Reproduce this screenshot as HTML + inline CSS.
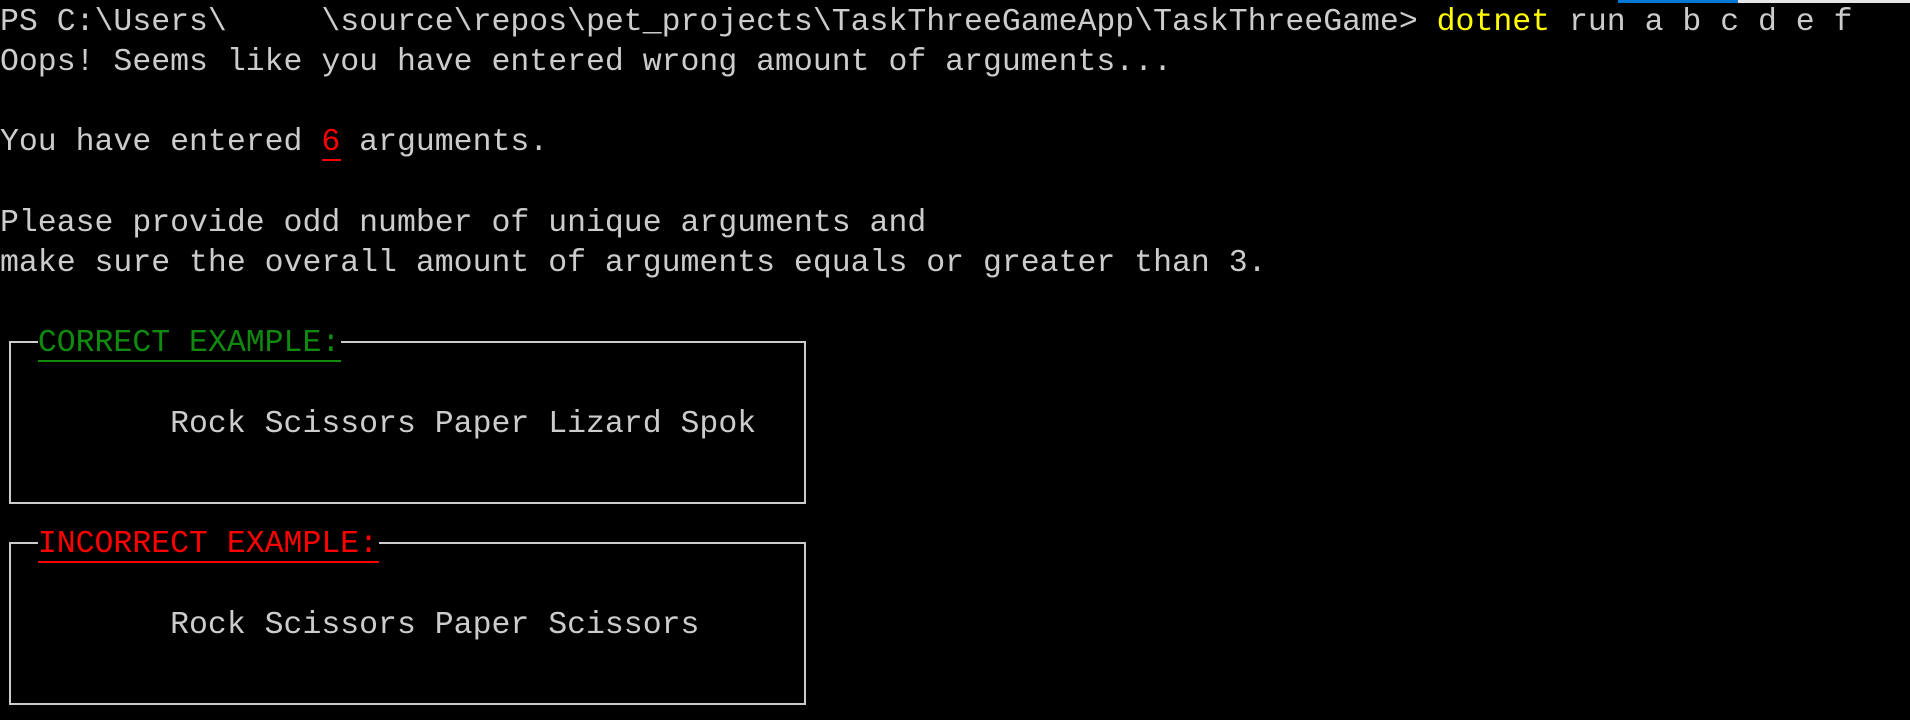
<!DOCTYPE html>
<html><head><meta charset="utf-8"><style>
html,body{margin:0;padding:0;background:#000;width:1910px;height:720px;overflow:hidden;position:relative}
.l{position:absolute;left:0;white-space:pre;font-family:"Liberation Mono",monospace;font-size:31.5px;line-height:40.2px;height:40.2px;color:#cccccc;padding-top:2.5px}
.y{color:#ffff00}.r{color:#ff0000}.g{color:#0f8a0f}
.u{position:absolute;height:2px}
.box{position:absolute;border:2px solid #cccccc;box-sizing:border-box}
.bar1{position:absolute;top:0;left:1618px;width:120px;height:3px;background:#0078d4}
.bar2{position:absolute;top:0;left:1738px;width:172px;height:3px;background:#e6e6e6}
</style></head><body>
<div class="bar1"></div><div class="bar2"></div>
<div class="box" style="left:8.5px;top:340.7px;width:797px;height:163px"></div>
<div class="box" style="left:8.5px;top:541.7px;width:797px;height:163px"></div>
<div style="position:absolute;left:37.9px;top:330px;width:302.9px;height:25px;background:#000"></div>
<div style="position:absolute;left:37.9px;top:531px;width:340.7px;height:25px;background:#000"></div>

<div class="l" style="top:0">PS C:\Users\     \source\repos\pet_projects\TaskThreeGameApp\TaskThreeGame&gt; <span class="y">dotnet</span> run a b c d e f</div>
<div class="l" style="top:40.2px">Oops! Seems like you have entered wrong amount of arguments...</div>
<div class="l" style="top:120.6px">You have entered <span class="r">6</span> arguments.</div>
<div class="u" style="left:321.8px;top:158.5px;width:18.9px;background:#ff0000"></div>
<div class="l" style="top:201px">Please provide odd number of unique arguments and</div>
<div class="l" style="top:241.2px">make sure the overall amount of arguments equals or greater than 3.</div>
<div class="l" style="top:321.6px">  <span class="g">CORRECT EXAMPLE:</span></div>
<div class="u" style="left:37.9px;top:359.5px;width:302.9px;background:#0f8a0f"></div>
<div class="l" style="top:402px">         Rock Scissors Paper Lizard Spok</div>
<div class="l" style="top:522.6px">  <span class="r">INCORRECT EXAMPLE:</span></div>
<div class="u" style="left:37.9px;top:560.5px;width:340.7px;background:#ff0000"></div>
<div class="l" style="top:603px">         Rock Scissors Paper Scissors</div>
</body></html>
